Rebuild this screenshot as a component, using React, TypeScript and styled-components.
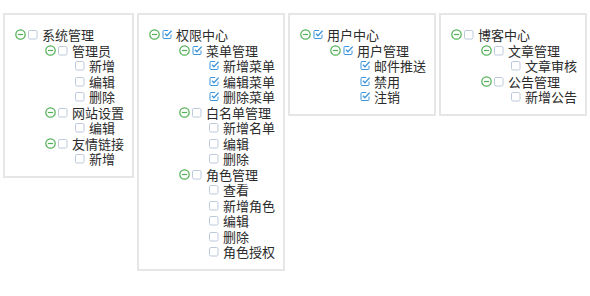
import React from 'react';
import styled, {createGlobalStyle} from "styled-components";

interface TreeNode {
    label: string,
    checked?: boolean,
    children?: TreeNode[]
}

const trees: TreeNode[] = [
    {
        label: '系统管理',
        children: [
            {label: '管理员', children: [{label: '新增'}, {label: '编辑'}, {label: '删除'}]},
            {label: '网站设置', children: [{label: '编辑'}]},
            {label: '友情链接', children: [{label: '新增'}]},
        ]
    },
    {
        label: '权限中心',
        checked: true,
        children: [
            {
                label: '菜单管理', checked: true, children: [
                    {label: '新增菜单', checked: true},
                    {label: '编辑菜单', checked: true},
                    {label: '删除菜单', checked: true},
                ]
            },
            {label: '白名单管理', children: [{label: '新增名单'}, {label: '编辑'}, {label: '删除'}]},
            {
                label: '角色管理', children: [
                    {label: '查看'}, {label: '新增角色'}, {label: '编辑'}, {label: '删除'}, {label: '角色授权'}
                ]
            },
        ]
    },
    {
        label: '用户中心',
        checked: true,
        children: [
            {
                label: '用户管理', checked: true, children: [
                    {label: '邮件推送', checked: true},
                    {label: '禁用', checked: true},
                    {label: '注销', checked: true},
                ]
            },
        ]
    },
    {
        label: '博客中心',
        children: [
            {label: '文章管理', children: [{label: '文章审核'}]},
            {label: '公告管理', children: [{label: '新增公告'}]},
        ]
    },
];

const Toggle = () => (
    <ToggleIcon width="11" height="11" viewBox="0 0 11 11">
        <circle cx="5.5" cy="5.5" r="4.7" fill="none" stroke="#52b155" strokeWidth="1.2"/>
        <line x1="2.9" y1="5.5" x2="8.1" y2="5.5" stroke="#52b155" strokeWidth="1.2"/>
    </ToggleIcon>
);

const Check: React.FC<{ checked?: boolean }> = ({checked}) => (
    <CheckIcon width="10" height="11" viewBox="0 0 10 11">
        {checked ? (
            <>
                <path d="M6.2 1.5H2a1 1 0 0 0-1 1v6a1 1 0 0 0 1 1h6a1 1 0 0 0 1-1V5.6"
                      fill="none" stroke="#3d95dc" strokeWidth="1"/>
                <path d="M3 4.8L4.9 6.7L9.6 1.6" fill="none" stroke="#3d95dc" strokeWidth="1.3"/>
            </>
        ) : (
            <rect x="0.5" y="1.5" width="8.5" height="8.5" rx="1.4" fill="#fff" stroke="#bccadb" strokeWidth="1"/>
        )}
    </CheckIcon>
);

const Node: React.FC<{ node: TreeNode }> = ({node}) => {
    const folder = !!node.children;
    return (
        <li>
            <Row>
                {folder && <Toggle/>}
                <Check checked={node.checked}/>
                <Label>{node.label}</Label>
            </Row>
            {folder && (
                <Branch>
                    {node.children!.map((c, i) => <Node key={i} node={c}/>)}
                </Branch>
            )}
        </li>
    );
};

export default function App() {
    return (
        <>
            <GlobalStyle/>
            <Page>
                {trees.map((t, i) => (
                    <Panel key={i}>
                        <Root>
                            <Node node={t}/>
                        </Root>
                    </Panel>
                ))}
            </Page>
        </>
    );
}

const GlobalStyle = createGlobalStyle`
  body {
    margin: 0;
    background: #fff;
    font-family: "Noto Sans CJK SC", "Noto Sans", sans-serif;
  }
`

const Page = styled.div`
  display: flex;
  align-items: flex-start;
  gap: 3px;
  padding: 13px 2px 0 3px;
`

const Panel = styled.div`
  border: 2px solid #e6e6e6;
  padding: 12px 8px 9px 10px;
`

const Root = styled.ul`
  list-style: none;
  margin: 0;
  padding: 0;
`

const Branch = styled.ul`
  list-style: none;
  margin: 0;
  padding: 0 0 0 30px;
`

const Row = styled.div`
  display: flex;
  align-items: center;
  height: 15.5px;
  white-space: nowrap;
`

const ToggleIcon = styled.svg`
  flex: none;
  margin-right: 2px;
`

const CheckIcon = styled.svg`
  flex: none;
  margin-right: 4px;
`

const Label = styled.span`
  font-size: 13px;
  line-height: 15.5px;
  color: #2b2b2b;
`
